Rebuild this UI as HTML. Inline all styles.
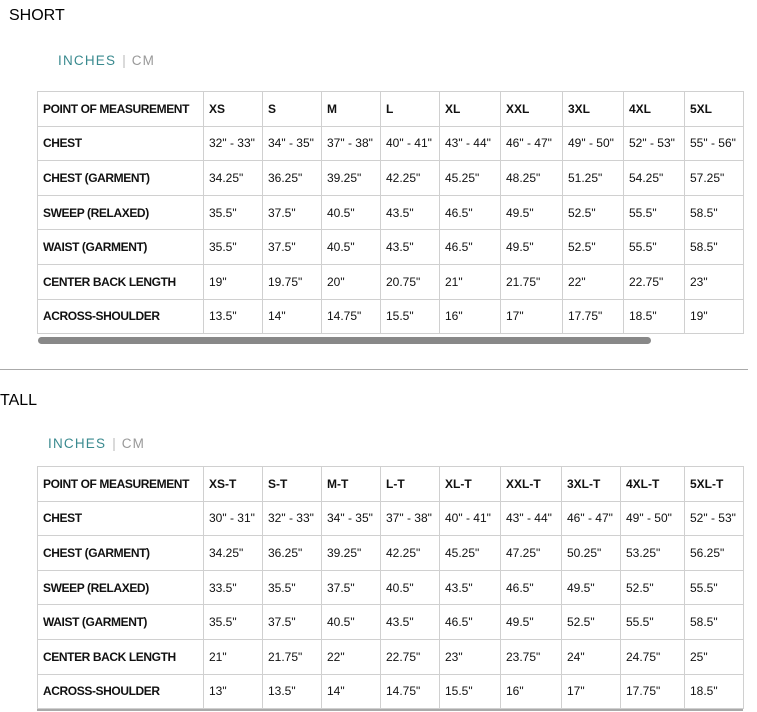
<!DOCTYPE html>
<html><head><meta charset="utf-8"><style>
body{margin:0;width:757px;height:712px;background:#fff;font-family:"Liberation Sans",sans-serif;color:#111;position:relative;overflow:hidden}
.h{position:absolute;font-size:16px;color:#000}
.u{position:absolute;font-size:13.5px;letter-spacing:1.2px;color:#3a8a8f}
.u span{color:#999}
.u i{font-style:normal;color:#bbb;margin:0 6px;letter-spacing:0}
table{position:absolute;left:37px;border-collapse:collapse;table-layout:fixed;font-size:12px}
td{border:1.5px solid #d0d0d0;height:33.6px;padding:0 0 0 5px;white-space:nowrap;overflow:hidden}
tr:first-child td{font-weight:bold}
td:first-child{font-weight:bold;letter-spacing:-0.4px}
.sb{position:absolute;left:38px;top:337px;width:613px;height:7px;border-radius:4px;background:#888}
.ln{position:absolute;left:0;top:369px;width:748px;height:1px;background:#aaa}
.ln2{position:absolute;left:37px;top:709px;width:706px;height:2px;background:#aaa}
</style></head><body>
<div class="h" style="left:9px;top:7px">SHORT</div>
<div class="u" style="left:58px;top:53px">INCHES<i>|</i><span>CM</span></div>
<table style="top:91px"><colgroup><col style="width:166px"><col style="width:59px"><col style="width:59px"><col style="width:59px"><col style="width:59px"><col style="width:61px"><col style="width:62px"><col style="width:61px"><col style="width:61px"><col style="width:59px"></colgroup>
<tr><td>POINT OF MEASUREMENT</td><td>XS</td><td>S</td><td>M</td><td>L</td><td>XL</td><td>XXL</td><td>3XL</td><td>4XL</td><td>5XL</td></tr>
<tr><td>CHEST</td><td>32" - 33"</td><td>34" - 35"</td><td>37" - 38"</td><td>40" - 41"</td><td>43" - 44"</td><td>46" - 47"</td><td>49" - 50"</td><td>52" - 53"</td><td>55" - 56"</td></tr>
<tr><td>CHEST (GARMENT)</td><td>34.25"</td><td>36.25"</td><td>39.25"</td><td>42.25"</td><td>45.25"</td><td>48.25"</td><td>51.25"</td><td>54.25"</td><td>57.25"</td></tr>
<tr><td>SWEEP (RELAXED)</td><td>35.5"</td><td>37.5"</td><td>40.5"</td><td>43.5"</td><td>46.5"</td><td>49.5"</td><td>52.5"</td><td>55.5"</td><td>58.5"</td></tr>
<tr><td>WAIST (GARMENT)</td><td>35.5"</td><td>37.5"</td><td>40.5"</td><td>43.5"</td><td>46.5"</td><td>49.5"</td><td>52.5"</td><td>55.5"</td><td>58.5"</td></tr>
<tr><td>CENTER BACK LENGTH</td><td>19"</td><td>19.75"</td><td>20"</td><td>20.75"</td><td>21"</td><td>21.75"</td><td>22"</td><td>22.75"</td><td>23"</td></tr>
<tr><td>ACROSS-SHOULDER</td><td>13.5"</td><td>14"</td><td>14.75"</td><td>15.5"</td><td>16"</td><td>17"</td><td>17.75"</td><td>18.5"</td><td>19"</td></tr>
</table>
<div class="sb"></div>
<div class="ln"></div>
<div class="h" style="left:0;top:392px">TALL</div>
<div class="u" style="left:48px;top:436px">INCHES<i>|</i><span>CM</span></div>
<table style="top:466px"><colgroup><col style="width:166px"><col style="width:59px"><col style="width:59px"><col style="width:59px"><col style="width:59px"><col style="width:61px"><col style="width:61px"><col style="width:59px"><col style="width:64px"><col style="width:59px"></colgroup>
<tr><td>POINT OF MEASUREMENT</td><td>XS-T</td><td>S-T</td><td>M-T</td><td>L-T</td><td>XL-T</td><td>XXL-T</td><td>3XL-T</td><td>4XL-T</td><td>5XL-T</td></tr>
<tr><td>CHEST</td><td>30" - 31"</td><td>32" - 33"</td><td>34" - 35"</td><td>37" - 38"</td><td>40" - 41"</td><td>43" - 44"</td><td>46" - 47"</td><td>49" - 50"</td><td>52" - 53"</td></tr>
<tr><td>CHEST (GARMENT)</td><td>34.25"</td><td>36.25"</td><td>39.25"</td><td>42.25"</td><td>45.25"</td><td>47.25"</td><td>50.25"</td><td>53.25"</td><td>56.25"</td></tr>
<tr><td>SWEEP (RELAXED)</td><td>33.5"</td><td>35.5"</td><td>37.5"</td><td>40.5"</td><td>43.5"</td><td>46.5"</td><td>49.5"</td><td>52.5"</td><td>55.5"</td></tr>
<tr><td>WAIST (GARMENT)</td><td>35.5"</td><td>37.5"</td><td>40.5"</td><td>43.5"</td><td>46.5"</td><td>49.5"</td><td>52.5"</td><td>55.5"</td><td>58.5"</td></tr>
<tr><td>CENTER BACK LENGTH</td><td>21"</td><td>21.75"</td><td>22"</td><td>22.75"</td><td>23"</td><td>23.75"</td><td>24"</td><td>24.75"</td><td>25"</td></tr>
<tr><td>ACROSS-SHOULDER</td><td>13"</td><td>13.5"</td><td>14"</td><td>14.75"</td><td>15.5"</td><td>16"</td><td>17"</td><td>17.75"</td><td>18.5"</td></tr>
</table>
<div class="ln2"></div>
</body></html>
